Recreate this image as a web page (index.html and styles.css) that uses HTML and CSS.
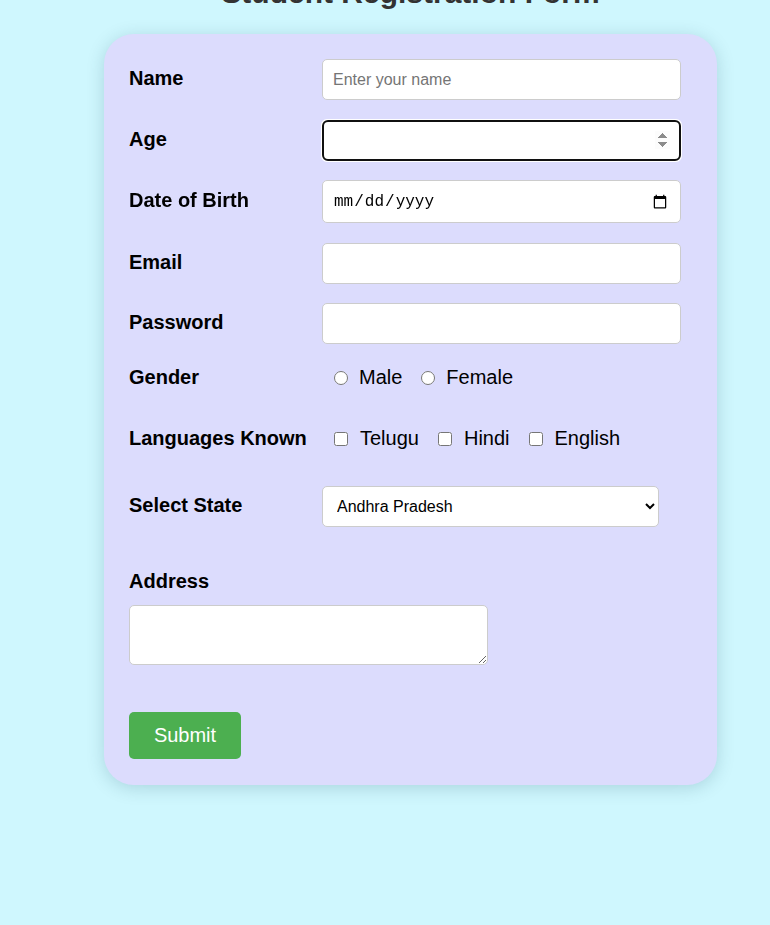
FILE: index.html
```html
<!DOCTYPE html>
<html lang="en">
<head>
<meta charset="utf-8">
<title>Student Registration Form</title>
<link rel="stylesheet" href="styles.css">
</head>
<body>
<div class="page">
  <h1 class="title">Student Registration Form</h1>
  <form class="card">
    <div class="row">
      <label class="label" for="name">Name</label>
      <input class="field" id="name" type="text" placeholder="Enter your name">
    </div>
    <div class="row">
      <label class="label" for="age">Age</label>
      <input class="field" id="age" type="number" autofocus>
    </div>
    <div class="row">
      <label class="label" for="dob">Date of Birth</label>
      <input class="field field-date" id="dob" type="date">
    </div>
    <div class="row">
      <label class="label" for="email">Email</label>
      <input class="field" id="email" type="email">
    </div>
    <div class="row">
      <label class="label" for="pw">Password</label>
      <input class="field" id="pw" type="password">
    </div>
    <div class="row row-options row-gender">
      <span class="label">Gender</span>
      <div class="options">
        <label class="option option-radio"><input type="radio" name="gender"> Male</label>
        <label class="option option-radio"><input type="radio" name="gender"> Female</label>
      </div>
    </div>
    <div class="row row-options row-lang">
      <span class="label">Languages Known</span>
      <div class="options">
        <label class="option option-check"><input type="checkbox"> Telugu</label>
        <label class="option option-check"><input type="checkbox"> Hindi</label>
        <label class="option option-check"><input type="checkbox"> English</label>
      </div>
    </div>
    <div class="row row-state">
      <label class="label" for="state">Select State</label>
      <select class="field select" id="state">
        <option>Andhra Pradesh</option>
        <option>Telangana</option>
        <option>Karnataka</option>
        <option>Tamil Nadu</option>
      </select>
    </div>
    <div class="address">
      <label class="label" for="addr">Address</label>
      <textarea class="textarea" id="addr"></textarea>
    </div>
    <button class="submit" type="button">Submit</button>
  </form>
</div>
</body>
</html>
```

FILE: styles.css
```css
html, body {
  margin: 0;
  padding: 0;
}

body {
  background: #cff7fe;
  font-family: "Liberation Sans", Arial, sans-serif;
  color: #000;
  height: 925px;
  overflow: hidden;
}

.page {
  width: 613px;
  margin-left: 104px;
}

.title {
  margin: -24px 0 0;
  font-size: 30px;
  line-height: 34px;
  font-weight: bold;
  text-align: center;
  color: #333;
}

.card {
  margin-top: 24px;
  background: #dcdcfd;
  border-radius: 30px;
  padding: 25px 25px 26px;
  box-shadow: 0 3px 18px rgba(0, 60, 80, 0.18);
}

.row {
  display: flex;
  align-items: center;
}

.row + .row {
  margin-top: 19.5px;
}

.label {
  width: 193px;
  flex: none;
  font-size: 20px;
  line-height: 23px;
  font-weight: bold;
  padding-bottom: 2px;
}

.field {
  width: 359px;
  height: 41px;
  box-sizing: border-box;
  padding: 0 10px;
  border: 1px solid #ccc;
  border-radius: 5px;
  background: #fff;
  font-family: "Liberation Sans", Arial, sans-serif;
  font-size: 16px;
  color: #000;
}

.field::placeholder {
  color: #757575;
}

.field-date {
  height: 43px;
  font-family: "Liberation Mono", "Courier New", monospace;
}

.row.row-gender {
  margin-top: 22px;
}

.row.row-lang {
  margin-top: 38px;
}

.row-options {
  height: 23px;
}

.row-options .label {
  padding-bottom: 0;
}

.options {
  display: flex;
  align-items: center;
  gap: 19px;
  padding-left: 12px;
}

.option {
  display: inline-flex;
  align-items: center;
  font-size: 20px;
  line-height: 23px;
}

.option input {
  width: 14px;
  height: 14px;
  margin: 0;
}

.option-radio {
  gap: 11px;
}

.option-check {
  gap: 12px;
}

.row.row-state {
  margin-top: 35.5px;
}

.select {
  width: 337px;
  padding: 0 10px;
}

.address {
  display: flex;
  flex-direction: column;
  margin-top: 43.5px;
}

.textarea {
  margin-top: 9.5px;
  width: 359px;
  height: 60px;
  box-sizing: border-box;
  border: 1px solid #ccc;
  border-radius: 5px;
  background: #fff;
  padding: 8px;
  font-family: "Liberation Sans", Arial, sans-serif;
  font-size: 16px;
}

.submit {
  display: block;
  margin-top: 47px;
  width: 112px;
  height: 47px;
  border: none;
  border-radius: 5px;
  background: #4caf50;
  color: #fff;
  font-family: "Liberation Sans", Arial, sans-serif;
  font-size: 20px;
  cursor: pointer;
}
```
